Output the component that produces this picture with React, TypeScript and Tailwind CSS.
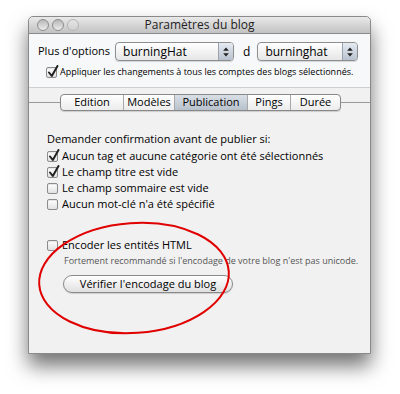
import React from "react";

const font = { fontFamily: '"Open Sans", "Noto Sans", "Liberation Sans", sans-serif' };

function Check({ checked }: { checked?: boolean }) {
  return (
    <span className="relative inline-block w-[11px] h-[11px] shrink-0 rounded-[2px] border border-[#8c8c8c] bg-gradient-to-b from-white to-[#e2e2e2] shadow-[inset_0_1px_1px_rgba(0,0,0,0.1)]">
      {checked && (
        <svg className="absolute left-[0px] top-[-3px]" width="12" height="13" viewBox="0 0 12 13">
          <path d="M2 7.5 L4.8 11 L10.5 1" fill="none" stroke="#222" strokeWidth="2" strokeLinecap="round" strokeLinejoin="round" />
        </svg>
      )}
    </span>
  );
}

function Popup({ label, width }: { label: string; width: string }) {
  return (
    <div className={`flex h-[19px] ${width} rounded-[4px] border border-[#8e8e8e] bg-gradient-to-b from-white to-[#e6e6e6] overflow-hidden shadow-[0_1px_1px_rgba(0,0,0,0.15)]`}>
      <div className="flex-1 pl-[7px] text-[12px] leading-[17px] text-black">{label}</div>
      <div className="w-[15px] flex items-center justify-center bg-gradient-to-b from-[#e6ebf2] to-[#b8c2cf] border-l border-[#9aa3ad]">
        <svg width="6" height="10" viewBox="0 0 6 10">
          <path d="M3 0.5 L5.8 3.8 L0.2 3.8 Z" fill="#222" />
          <path d="M3 9.5 L5.8 6.2 L0.2 6.2 Z" fill="#222" />
        </svg>
      </div>
    </div>
  );
}

const tabs = ["Edition", "Modèles", "Publication", "Pings", "Durée"];
const tabW = ["w-[62px]", "w-[51px]", "w-[73px]", "w-[43px]", "w-[50px]"];

export default function App() {
  return (
    <div className="w-[400px] h-[394px] bg-white relative overflow-hidden" style={font}>
      <div className="pl-[28px] pt-[16px]">
        <div className="relative w-[343px] h-[338px] flex flex-col bg-[#f1f1f1] border border-[#8a8a8a] rounded-t-[5px] shadow-[0_12px_20px_rgba(0,0,0,0.55)]">
          {/* title bar */}
          <div className="relative h-[17px] shrink-0 flex items-center rounded-t-[5px] bg-gradient-to-b from-[#e9e9e9] to-[#c2c2c2] border-b border-[#8a8a8a]">
            <div className="flex gap-[3px] pl-[8px]">
              {[0, 1, 2].map((i) => (
                <span
                  key={i}
                  className={`w-[12px] h-[12px] rounded-full border bg-gradient-to-b ${i === 2 ? "from-[#e4e4e4] to-[#d2d2d2] border-[#b5b5b5]" : "from-[#b8b8b8] to-[#ececec] border-[#8d8d8d]"}`}
                />
              ))}
            </div>
            <div className="absolute inset-0 flex items-center justify-center text-[12px] text-[#222]">Paramètres du blog</div>
          </div>
          {/* top panel */}
          <div className="h-[54px] shrink-0 bg-[#f7f8fa] border-b border-[#cfcfcf] pt-[8px] pl-[9px]">
            <div className="flex items-center h-[19px]">
              <span className="text-[11px] text-black">Plus d'options</span>
              <div className="ml-[5px]">
                <Popup label="burningHat" width="w-[119px]" />
              </div>
              <span className="ml-[9px] text-[12px] text-black">d</span>
              <div className="ml-[7px]">
                <Popup label="burninghat" width="w-[101px]" />
              </div>
            </div>
            <div className="flex items-center mt-[4px] ml-[8px] gap-[3px] h-[14px]">
              <Check checked />
              <span className="text-[9px] text-black">Appliquer les changements à tous les comptes des blogs sélectionnés.</span>
            </div>
          </div>
          {/* tabs */}
          <div className="relative mt-[6px] h-[17px] shrink-0 flex items-center">
            <div className="absolute left-0 right-0 top-[8px] h-px bg-[#9a9a9a]" />
            <div className="relative ml-[31px] flex h-[17px] rounded-[4px] border border-[#888] bg-gradient-to-b from-white to-[#ececec] overflow-hidden shadow-[0_1px_1px_rgba(0,0,0,0.15)]">
              {tabs.map((t, i) => (
                <div
                  key={t}
                  className={`${tabW[i]} flex items-center justify-center text-[11px] text-black ${i > 0 ? "border-l border-[#a8a8a8]" : ""} ${i === 2 ? "bg-gradient-to-b from-[#d9dfe6] to-[#b7c1cc]" : ""}`}
                >
                  {t}
                </div>
              ))}
            </div>
          </div>
          {/* content */}
          <div className="relative flex-1 pl-[18px] pt-[20px]">
            <div className="text-[11px] text-black leading-[16px] h-[16px]">Demander confirmation avant de publier si:</div>
            <div className="mt-[1px] flex flex-col">
              {[
                ["Aucun tag et aucune catégorie ont été sélectionnés", true],
                ["Le champ titre est vide", true],
                ["Le champ sommaire est vide", false],
                ["Aucun mot-clé n'a été spécifié", false],
              ].map(([l, c]) => (
                <div key={l as string} className="flex items-center gap-[4px] h-[16px]">
                  <Check checked={c as boolean} />
                  <span className="text-[11px] text-black">{l as string}</span>
                </div>
              ))}
            </div>
            <div className="mt-[25px] flex items-center gap-[4px] h-[16px]">
              <Check />
              <span className="text-[11px] text-black">Encoder les entités HTML</span>
            </div>
            <div className="mt-[2px] pl-[17px] text-[9px] text-[#555] leading-[12px] h-[12px] whitespace-nowrap">
              Fortement recommandé si l'encodage de votre blog n'est pas unicode.
            </div>
            <div className="mt-[8px] ml-[16px] w-[170px] h-[18px] rounded-full border border-[#8a8a8a] bg-gradient-to-b from-white to-[#e0e0e0] flex items-center justify-center text-[11px] text-black shadow-[0_1px_1px_rgba(0,0,0,0.15)]">
              Vérifier l'encodage du blog
            </div>
          </div>
        </div>
      </div>
      <svg className="absolute left-0 top-0 pointer-events-none" width="400" height="394" viewBox="0 0 400 394">
        <ellipse cx="134" cy="278" rx="95" ry="55" fill="none" stroke="#e00000" strokeWidth="2" transform="rotate(-4 134 278)" />
      </svg>
    </div>
  );
}
